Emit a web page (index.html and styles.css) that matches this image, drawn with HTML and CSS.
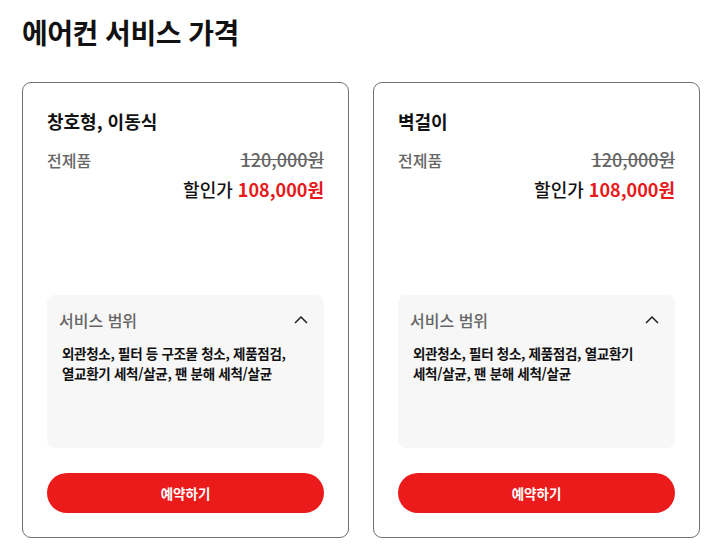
FILE: index.html
```html
<!DOCTYPE html>
<html lang="ko">
<head>
<meta charset="utf-8">
<link rel="stylesheet" href="styles.css">
</head>
<body>
<main class="page">
  <h1 class="title">에어컨 서비스 가격</h1>
  <div class="cards">
    <section class="card">
      <h2 class="card-title">창호형, 이동식</h2>
      <div class="price-row">
        <span class="label">전제품</span>
        <span class="orig">120,000원</span>
      </div>
      <div class="sale-row">할인가 <strong class="sale">108,000원</strong></div>
      <div class="scope">
        <div class="scope-head">
          <span>서비스 범위</span>
          <svg class="chev" width="14" height="8" viewBox="0 0 14 8"><path d="M1 7 L7 1 L13 7" fill="none" stroke="#222" stroke-width="1.5"/></svg>
        </div>
        <p class="scope-text">외관청소, 필터 등 구조물 청소, 제품점검,<br>열교환기 세척/살균, 팬 분해 세척/살균</p>
      </div>
      <button class="btn">예약하기</button>
    </section>
    <section class="card">
      <h2 class="card-title">벽걸이</h2>
      <div class="price-row">
        <span class="label">전제품</span>
        <span class="orig">120,000원</span>
      </div>
      <div class="sale-row">할인가 <strong class="sale">108,000원</strong></div>
      <div class="scope">
        <div class="scope-head">
          <span>서비스 범위</span>
          <svg class="chev" width="14" height="8" viewBox="0 0 14 8"><path d="M1 7 L7 1 L13 7" fill="none" stroke="#222" stroke-width="1.5"/></svg>
        </div>
        <p class="scope-text">외관청소, 필터 청소, 제품점검, 열교환기<br>세척/살균, 팬 분해 세척/살균</p>
      </div>
      <button class="btn">예약하기</button>
    </section>
  </div>
</main>
</body>
</html>
```
FILE: styles.css
```css
* { box-sizing: border-box; }
body {
  margin: 0;
  background: #fff;
  font-family: "Noto Sans CJK KR", "Noto Sans", sans-serif;
  color: #111;
}
.page {
  padding: 12px 12px 0 22px;
}
.title {
  margin: 0;
  font-size: 28px;
  font-weight: 700;
  line-height: 40px;
  letter-spacing: -0.5px;
}
.cards {
  display: grid;
  grid-template-columns: 327px 327px;
  gap: 24px;
  margin-top: 30px;
}
.card {
  border: 1px solid #707070;
  border-radius: 9px;
  padding: 24px;
  display: flex;
  flex-direction: column;
  height: 456px;
}
.card-title {
  margin: 0;
  font-size: 18px;
  font-weight: 700;
  line-height: 28px;
}
.price-row {
  margin-top: 12px;
  display: flex;
  justify-content: space-between;
  align-items: baseline;
  line-height: 24px;
  color: #666;
}
.label {
  font-size: 16px;
  font-weight: 500;
}
.orig {
  text-decoration: line-through;
  font-size: 18px;
  font-weight: 500;
}
.sale-row {
  margin-top: 5px;
  text-align: right;
  font-size: 18px;
  font-weight: 500;
  line-height: 24px;
  color: #111;
}
.sale {
  color: #e8191a;
  font-weight: 700;
}
.scope {
  margin-top: auto;
  background: #f7f7f7;
  border-radius: 8px;
  padding: 12px;
  height: 153px;
}
.scope-head {
  display: flex;
  justify-content: space-between;
  align-items: center;
  font-size: 16px;
  font-weight: 500;
  line-height: 26px;
  color: #666;
}
.chev { margin-right: 4px; }
.scope-text {
  margin: 10px 0 0 3px;
  font-size: 13.5px;
  font-weight: 700;
  line-height: 20px;
  color: #111;
  letter-spacing: -0.3px;
}
.btn {
  margin-top: 25px;
  height: 40px;
  border: none;
  border-radius: 20px;
  background: #ec1b1b;
  color: #fff;
  font-family: inherit;
  font-size: 13.5px;
  font-weight: 700;
}
```
